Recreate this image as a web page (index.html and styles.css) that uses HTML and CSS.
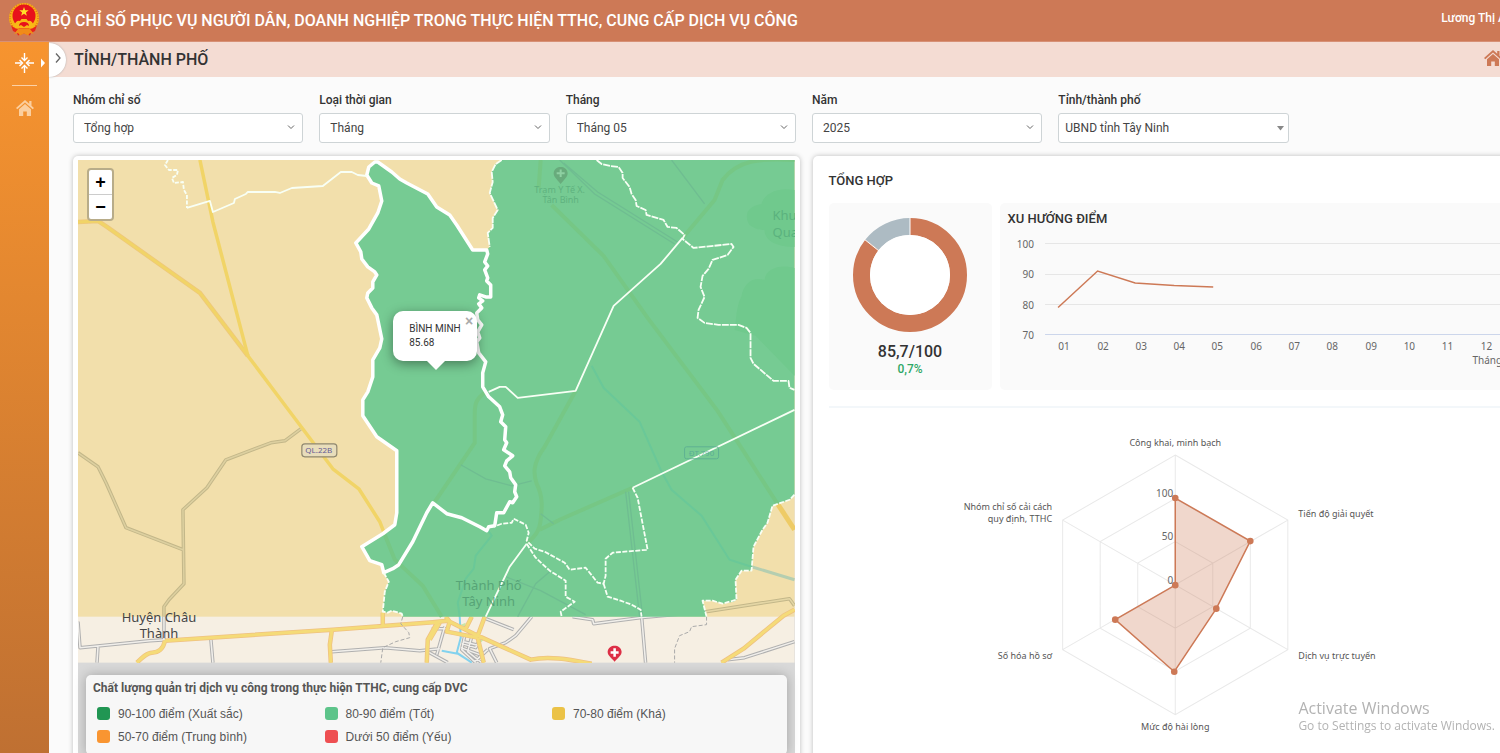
FILE: index.html
```html
<!DOCTYPE html>
<html lang="vi">
<head>
<meta charset="utf-8">
<meta name="viewport" content="width=device-width, initial-scale=1">
<title>Bộ chỉ số phục vụ người dân, doanh nghiệp</title>
<link rel="stylesheet" href="styles.css">
</head>
<body>
<svg class="sprite" aria-hidden="true">
  <symbol id="house" viewBox="0 0 18 16"><path d="M9 0 0 8l1.300 1.300L9 2.600l7.700 6.700L18 8l-2.500-2.200V1h-2.300v2.700z"/><path d="M9 4 3 9.300V16h4.200v-4.500h3.600V16H15V9.300z"/></symbol>
  <symbol id="chevron" viewBox="0 0 8 8"><path d="M1 2.500 4 5.500 7 2.500" fill="none" stroke="currentColor" stroke-width="1"/></symbol>
</svg>
<div class="app">
  <header class="topbar">
    <svg class="emblem" viewBox="0 0 32 34" aria-label="Quốc huy">
      <circle cx="16" cy="16" r="15" fill="#f7b516"/>
      <circle cx="16" cy="16" r="14" fill="none" stroke="#e2711c" stroke-width="1.500" stroke-dasharray="1 1.500"/>
      <circle cx="16" cy="14" r="11.500" fill="#e8121b"/>
      <path d="M16 5l1.200 3.300h3.500l-2.800 2.100 1 3.400-2.900-2-2.900 2 1-3.400-2.800-2.100h3.500z" fill="#ffe028"/>
      <path d="M6 24q2-6 6-5l1.500-2h5l1.500 2q4-1 6 5-3 5-10 6Q9 29 6 24z" fill="#f9b916"/>
      <path d="M11 24q0-4 5-4t5 4l-2-1-3 2-3-2z" fill="#e8121b"/>
      <path d="M3 23q5 5 8 3.500h10q3 1.500 8-3.500l-2 6-4 2-1 2.500-6-2-6 2-1-2.500-4-2z" fill="#e8231b"/>
      <path d="M6 32l4-5h12l4 5-4-1-2 2.500-4-2-4 2L10 31z" fill="#f18b18"/>
    </svg>
    <h1 class="brand">BỘ CHỈ SỐ PHỤC VỤ NGƯỜI DÂN, DOANH NGHIỆP TRONG THỰC HIỆN TTHC, CUNG CẤP DỊCH VỤ CÔNG</h1>
    <span class="user">Lương Thị Á</span>
  </header>
  <div class="shell">
    <nav class="sidebar">
      <button class="side-btn" aria-label="Thu gọn">
        <svg viewBox="0 0 28 20" class="compress"><g fill="none" stroke="#fff" stroke-width="1.400"><path d="M0 10h7M19 10h-7M9.500 0v7M9.500 20v-7"/><path d="M4.500 7 7.500 10l-3 3M14.500 7l-3 3 3 3M6.500 4.500l3 3 3-3M6.500 15.500l3-3 3 3"/></g><path d="M26 5.500l4 4.500-4 4.500z" fill="#fff"/></svg>
      </button>
      <hr class="side-rule">
      <a href="#" class="side-link" aria-label="Trang chủ"><svg class="house"><use href="#house"/></svg></a>
    </nav>
    <main class="main">
      <div class="titlebar">
        <button class="expand" aria-label="Mở menu"><svg viewBox="0 0 8 12"><path d="M2 1.500 6 6l-4 4.500" fill="none" stroke="#666" stroke-width="1.300"/></svg></button>
        <h2>TỈNH/THÀNH PHỐ</h2>
        <a href="#" class="home" aria-label="Trang chủ"><svg class="house"><use href="#house"/></svg></a>
      </div>
      <div class="content">
        <form class="filters">
          <div class="field"><label for="f1">Nhóm chỉ số</label><div class="pick"><select id="f1"><option>Tổng hợp</option></select><svg><use href="#chevron"/></svg></div></div>
          <div class="field"><label for="f2">Loại thời gian</label><div class="pick"><select id="f2"><option>Tháng</option></select><svg><use href="#chevron"/></svg></div></div>
          <div class="field"><label for="f3">Tháng</label><div class="pick"><select id="f3"><option>Tháng 05</option></select><svg><use href="#chevron"/></svg></div></div>
          <div class="field"><label for="f4">Năm</label><div class="pick"><select id="f4"><option>2025</option></select><svg><use href="#chevron"/></svg></div></div>
          <div class="field"><label for="f5">Tỉnh/thành phố</label><div class="pick pick-solid"><select id="f5"><option>UBND tỉnh Tây Ninh</option></select><svg viewBox="0 0 8 8"><path d="M1 2h7L4.500 6.500z" fill="#888"/></svg></div></div>
        </form>
        <div class="cards">
          <section class="card map-card">
            <div class="map">
              <div class="map-view">
              <svg class="tiles" viewBox="78 160 717 503">
                <rect x="78" y="160" width="717" height="503" fill="#f6efe3"/>
                <rect x="78" y="160" width="717" height="457" fill="#f2dfab"/>
                <g fill="none" stroke-linejoin="round">
                  <path stroke="#c3b789" stroke-width="3.500" d="M78 453 98 467 106 483 126 528 183 550M301 429 285 441 271 443 226 460 207 488 183 510 184 584 169 600 164 607 164 617"/>
                  <path stroke="#ddd0a0" stroke-width="1.500" d="M78 453 98 467 106 483 126 528 183 550M301 429 285 441 271 443 226 460 207 488 183 510 184 584 169 600 164 607 164 617"/>
                  <path stroke="#eec77c" stroke-width="4.500" d="M78 222 98 221 107 227 200 293 248 356"/>
                  <path stroke="#f1d467" stroke-width="3" d="M78 222 98 221 107 227 200 293 248 356"/>
                  <path stroke="#f1d467" stroke-width="3.500" d="M200 160 213 222 248 356 290 412 333 469 359 489 380 522 385 535"/>
                  <path stroke="#c3b789" stroke-width="3.500" d="M706 612 790 599 795 606"/><path stroke="#e4d6a5" stroke-width="1.500" d="M706 612 790 599 795 606"/>
                  <path stroke="#b5ceb0" stroke-width="3" d="M752 567 795 580"/>
                  <path stroke="#eecb66" stroke-width="5" d="M778 504 795 530"/>
                  <path stroke="#b0b0b0" stroke-width="3.500" d="M164 617V641M78 622 80 648 150 641 166 640M98 647 97 663M211 640 213 663M332 652 385 648 420 651 440 649M486 619 514 630M532 617 516 636 506 643 490 649 497 663M573 617 593 620 594 624 640 618 706 612M642 617 646 663M795 642 745 658 728 660M445 627 437 655M428 652 448 663M447 629H432M465 636 462 650 476 663M461 648 480 655M472 637 468 652 482 663M480 640 476 648 462 644M488 650 475 662M464 642 480 646"/>
                  <path stroke="#f1efeb" stroke-width="1.500" d="M164 617V641M78 622 80 648 150 641 166 640M98 647 97 663M211 640 213 663M332 652 385 648 420 651 440 649M486 619 514 630M532 617 516 636 506 643 490 649 497 663M573 617 593 620 594 624 640 618 706 612M642 617 646 663M795 642 745 658 728 660M445 627 437 655M428 652 448 663M447 629H432M465 636 462 650 476 663M461 648 480 655M472 637 468 652 482 663M480 640 476 648 462 644M488 650 475 662M464 642 480 646"/>
                  <path fill="#c9e6a4" d="M461 625 466 623 465 628zM478 639 485 639 481 643z"/>
                  <path stroke="#83d2ee" stroke-width="2" d="M460 617 461 638 457 653 472 663M442 651 458 654 466 659"/>
                  <path stroke="#efc181" stroke-width="4.500" d="M165 641 333 630 440 622M165 641C163 651 157 653 152 653S142 658 137 663M332 631 330 645 331 663M383 613V626M438 622 428 640 427 663M428 623 448 621 478 636 531 660C550 656 570 660 592 664M440 623 430 640M446 617 450 622 447 632 478 638M478 636 485 617M478 638 484 663M466 629 472 617M722 663 744 649 784 616 795 610"/>
                  <path stroke="#f5db78" stroke-width="3" d="M165 641 333 630 440 622M165 641C163 651 157 653 152 653S142 658 137 663M332 631 330 645 331 663M383 613V626M438 622 428 640 427 663M428 623 448 621 478 636 531 660C550 656 570 660 592 664M440 623 430 640M446 617 450 622 447 632 478 638M478 636 485 617M478 638 484 663M466 629 472 617M722 663 744 649 784 616 795 610"/>
                  <path stroke="#aaa" stroke-dasharray="4 2" d="M403 617 401 624 409 633 410 638 396 642 383 648 381 663M707 617V625L692 627 690 632 680 636 675 649V663"/>
                </g>
                <path fill="#76cb93" d="M795 160H502L496 164 492 172 493 182 490 193 498 210 493 218V228L488 233 490 247 487 250H473L457 225 450 215 437 207 428 194 407 183 392 172 378 162H375L369 167 367 175 372 183 379 186 382 201 378 213 369 229 356 243 361 252 362 259 368 267 375 272 377 275 373 282V288L367 298 372 308 377 315 382 339 380 348 373 360V377L368 392 363 400V416L377 437 397 451V513L395 525 383 534 362 547 370 561 382 565 384 573 389 582 385 592 383 612 388 613 392 611 402 614 403 617H707L703 601H713L723 604 734 602 737 600 736 580 742 571H752L754 547 763 530 768 523 773 506 790 500 795 495z"/>
                <path fill="#70c98d" d="M795 190C778 187 764 194 762 204 748 206 744 215 750 225 757 230 762 230 765 230 765 242 780 247 795 247zM795 268C782 264 766 268 765 280 752 276 744 285 742 296 736 308 737 320 735 330L756 336 795 338zM756 336 795 376V338z"/>
                <g fill="none" stroke="#76c785" stroke-width="4">
                  <path d="M541 160 539 188M552 205 604 256 648 318 718 411 778 504M795 160C760 158 738 160 723 180L715 200 683 238M576 391 545 447C532 465 534 475 537 484 544 498 542 510 541 520 540 532 534 538 527 544M633 488 560 520 540 530M487 391C475 400 475 405 475 415V443L435 502M385 535 395 560 423 586 442 617"/>
                </g>
                <g fill="none" stroke="#6fbd91" stroke-width="1.300">
                  <path d="M560 160 595 194 675 244M564 163 598 192 678 242M672 160 705 204M461 465 486 479 512 486 532 481M626 492 640 617M629 492 643 617M541 514 554 524M550 572 536 584 518 617M506 577 541 591 586 615"/>
                </g>
                <g fill="none" stroke="#6ac898" stroke-width="2"><path d="M592 366 604 388 640 422 662 472 672 490 702 516 730 560 752 567M488 530 492 536 476 556 474 569 466 579 458 603 460 617"/></g>
                <path fill="none" stroke="#fff" stroke-width="3.500" stroke-linejoin="round" d="M367 175 369 167 375 162H378L392 172 400 179 407 183 428 194 437 207 450 215 457 225 473 250H487L488 254 485 262 488 266 485 270 488 278 487 281 491 285V297H486L480 295 479 298 483 301 479 304 482 308 477 313 478 320 482 325 478 332 480 338 477 342 479 353 486 362 483 373V387L489 397 500 407 503 415 501 422 506 427 505 440 507 443 504 450 513 456 507 461 505 466 510 472 511 478 516 485 515 492 517 497 513 503 510 502 504 513H497L495 526 489 527 487 531 480 527 462 518 447 514 433 503 427 513 413 542 399 565 393 569 384 573 382 565 370 561 362 547 383 534 395 525 397 513V451L377 437 363 416V400L368 392 373 377V360L380 348 382 339 377 315 372 308 367 298 368 293 373 288V282L377 275 375 272 368 267 362 259 361 252 356 243 369 229 378 213 382 201 379 186 372 183z"/>
                <g fill="none" stroke="#f8fff5" stroke-width="1.800" stroke-linejoin="round">
                  <path d="M187 208 210 201 213 212 234 203 235 199 246 194 248 192H275L280 193 292 188 323 186 341 172 352 172 358 175 367 176"/>
                  <path stroke-dasharray="4 1.500" d="M168 160 165 165 169 170H178L177 175 172 178 174 183 183 182 184 190 187 195 187 208"/>
                  <path stroke-dasharray="7 1" d="M502 160 496 164 492 172 493 182 490 193 498 210 493 218V228L488 233 490 247M597 160 602 164 611 166 619 167 623 173 623 178 630 187 632 194 636 200 637 206 646 210 647 215 664 220 668 227 677 228 685 235 683 239 694 248 732 244 734 247 728 255 713 260 709 269 703 276 701 287 705 297 699 310 698 318 705 323 719 325H739L747 328 751 333V358L754 364 774 381H789L790 388 795 390"/>
                  <path d="M683 238 661 264 614 306 576 391 518 398 506 387 500 387 489 392M486 617 510 567 527 544M795 410 633 488"/>
                  <path stroke-dasharray="5 1.500" d="M633 488 638 498 648 550 613 553 606 559V576L604 584 598 583 586 568 570 570 565 563 545 552 535 549 527 541 529 533 526 525 514 519 512 523 502 524 494 527M527 544 536 558 550 571 566 581V597L575 602 561 612 562 617M604 584 608 597 621 601 632 605 641 610 642 617M384 573 389 582 385 592 383 612 388 613 392 611 402 614 403 617M795 495 790 500 773 506 768 523 763 530 754 547 752 571H742L736 580 737 600 723 604 713 601H703L707 617"/>
                </g>
                <rect x="302" y="444" width="35" height="13" rx="3" fill="#e8ddbb" stroke="#8f876f" stroke-width="1.200"/>
                <text class="shield" x="319" y="453">QL.22B</text>
                <rect x="685" y="447" width="34" height="12" rx="2" fill="none" stroke="#5eb193"/>
                <text class="shield faded" x="702" y="456">ĐT.790</text>
                <path d="M561 184C557 179 554 177 554 173 555 165 567 165 568 173 568 177 565 179 561 184z" fill="#68ab7c"/><path d="M561 169.500V177M557 173.300H565" stroke="#8ed0a2" stroke-width="2"/>
                <g class="poi"><text x="560" y="193">Trạm Y Tế X.</text><text x="561" y="203">Tân Bình</text></g>
                <g class="park"><text x="773" y="220">Khu</text><text x="773" y="237">Qua</text></g>
                <g class="city faded"><text x="489" y="590">Thành Phố</text><text x="489" y="606">Tây Ninh</text></g>
                <g class="city"><text x="159" y="622">Huyện Châu</text><text x="159" y="638">Thành</text></g>
                <path d="M615 662C611 657 608 656 608 652 609 644 621 644 622 652 622 656 619 657 615 662z" fill="#dd2f46"/><path d="M615 648.500V657M611 652.800H619" stroke="#fff" stroke-width="2.500"/>
              </svg>
              <div class="zoom"><button aria-label="Phóng to">+</button><button aria-label="Thu nhỏ">−</button></div>
              <div class="popup"><button class="close" aria-label="Đóng">×</button>BÌNH MINH<br>85.68</div>
              </div>
              <div class="legend">
                <h3>Chất lượng quản trị dịch vụ công trong thực hiện TTHC, cung cấp DVC</h3>
                <ul>
                  <li><i class="sw c90"></i>90-100 điểm (Xuất sắc)</li>
                  <li><i class="sw c80"></i>80-90 điểm (Tốt)</li>
                  <li><i class="sw c70"></i>70-80 điểm (Khá)</li>
                  <li><i class="sw c50"></i>50-70 điểm (Trung bình)</li>
                  <li><i class="sw c00"></i>Dưới 50 điểm (Yếu)</li>
                </ul>
              </div>
            </div>
          </section>
          <section class="card stats">
            <h3 class="heading">TỔNG HỢP</h3>
            <div class="panels">
              <div class="panel score">
                <svg viewBox="-57 -57 114 114">
                  <g fill="none" stroke-width="17"><circle r="48.500" stroke="#cd7956" pathLength="100" stroke-dasharray="85.700 14.300" transform="rotate(-90)"/><circle r="48.500" stroke="#adbbc3" pathLength="100" stroke-dasharray="14.300 85.700" stroke-dashoffset="-85.700" transform="rotate(-90)"/></g>
                  <path d="M0-58v20M-46-36-31-24" stroke="#fff" stroke-width="1"/>
                  <circle r="40" fill="#fff"/>
                </svg>
                <strong>85,7/100</strong>
                <span>0,7%</span>
              </div>
              <div class="panel trend">
                <h3 class="heading">XU HƯỚNG ĐIỂM</h3>
                <svg viewBox="0 0 521 144">
                  <g stroke="#e6e6e6"><path d="M45 11.500H506M45 42.500H506M45 72.500H506"/><path d="M45 102.500H506" stroke="#ccd6eb"/></g>
                  <path d="M58 75.500 97.500 39 135 51 174 53.500 213 55" fill="none" stroke="#cd7956" stroke-width="1.500"/>
                  <g class="axis end"><text x="34" y="16">100</text><text x="34" y="46">90</text><text x="34" y="77">80</text><text x="34" y="107">70</text></g>
                  <g class="axis mid"><text x="64" y="118">01</text><text x="103" y="118">02</text><text x="141" y="118">03</text><text x="179" y="118">04</text><text x="217" y="118">05</text><text x="256" y="118">06</text><text x="294" y="118">07</text><text x="332" y="118">08</text><text x="371" y="118">09</text><text x="409" y="118">10</text><text x="447" y="118">11</text><text x="486" y="118">12</text></g>
                  <text class="axis" x="472" y="132">Tháng</text>
                </svg>
              </div>
            </div>
            <hr class="rule">
            <svg class="radar" viewBox="829 408 692 350">
              <g fill="none" stroke="#e9e9e9">
                <path d="M1175 455 1287.500 520V649.500L1175 714.500 1062.500 649.500V520zM1175 498.500 1250 541.500V628L1175 671 1100 628V541.500zM1175 541.500 1212.500 563V606.500L1175 628 1137.500 606.500V563zM1175 455V714.500M1062.500 520 1287.500 649.500M1287.500 520 1062.500 649.500"/>
              </g>
              <path d="M1175 498 1250 541 1216 608.500 1174 671.500 1115 619.500 1175 585z" fill="#cd7956" fill-opacity=".3" stroke="#cd7956" stroke-width="1.500"/>
              <g fill="#cd7956"><circle cx="1175" cy="498" r="3.300"/><circle cx="1250" cy="541" r="3.300"/><circle cx="1216" cy="608.500" r="3.300"/><circle cx="1174" cy="671.500" r="3.300"/><circle cx="1115" cy="619.500" r="3.300"/><circle cx="1175" cy="585" r="3.300"/></g>
              <g class="axis end"><text x="1173" y="497">100</text><text x="1173" y="540">50</text><text x="1173" y="584">0</text></g>
              <g class="cat mid"><text x="1175" y="446">Công khai, minh bạch</text><text x="1175" y="730">Mức độ hài lòng</text></g>
              <g class="cat"><text x="1298" y="517">Tiến độ giải quyết</text><text x="1298" y="659">Dịch vụ trực tuyến</text></g>
              <g class="cat end"><text x="1052" y="510">Nhóm chỉ số cải cách</text><text x="1052" y="522">quy định, TTHC</text><text x="1052" y="659">Số hóa hồ sơ</text></g>
            </svg>
          </section>
        </div>
      </div>
    </main>
  </div>
</div>
<aside class="watermark"><p>Activate Windows</p><small>Go to Settings to activate Windows.</small></aside>
</body>
</html>
```
FILE: styles.css
```css
* { box-sizing: border-box; }
body {
  margin: 0;
  height: 100vh;
  overflow: hidden;
  background: #fbfbfb;
  color: #333;
  font: 12px/16px Roboto, "Noto Sans", sans-serif;
}
h1, h2, h3, p, ul { margin: 0; padding: 0; }
button { padding: 0; border: 0; background: none; color: inherit; font: inherit; }
.sprite { display: none; }
.app { width: calc(100% + 63px); min-height: 100vh; display: flex; flex-direction: column; }

.topbar {
  display: flex;
  align-items: center;
  height: 42px;
  padding: 0 57px 0 8px;
  background: #cd7956;
  border-bottom: 1px solid #d79176;
  color: #fff;
}
.emblem { width: 32px; height: 34px; margin-bottom: 4px; }
.brand { margin-left: 10px; font-size: 16px; line-height: 20px; font-weight: 500; white-space: nowrap; }
.user { margin-left: auto; padding-bottom: 5px; font-weight: 500; }

.shell { display: flex; flex: 1; }
.sidebar {
  flex: none;
  width: 49px;
  height: calc(100vh - 42px);
  padding-top: 11px;
  background: linear-gradient(#f7942f, #bf7032);
  text-align: center;
}
.side-btn { display: block; width: 49px; height: 20px; }
.compress { display: block; width: 28px; height: 20px; margin-left: 15px; overflow: visible; }
.side-rule { width: 25px; height: 1px; margin: 12px auto 14px; border: 0; background: #fbd1a6; }
.house { width: 18px; height: 16px; fill: currentColor; }
.side-link { color: #fbcf9f; }

.main { flex: 1; min-width: 0; }
.titlebar {
  display: flex;
  align-items: center;
  height: 35px;
  padding-right: 61px;
  background: #f4dcd3;
}
.titlebar h2 { margin-left: 8px; font-size: 16px; line-height: 20px; font-weight: 500; }
.expand {
  width: 17px;
  height: 34px;
  border-radius: 0 17px 17px 0;
  background: #fff;
  box-shadow: 0 0 2px #aaa;
}
.expand svg { width: 8px; height: 12px; }
.home { margin-left: auto; padding-bottom: 3px; color: #cd7956; }
.home .house { display: block; }

.content { padding: 15px 24px 0; }
.filters { display: grid; grid-template-columns: repeat(6, 1fr); gap: 16px; padding-right: 4px; }
.field label { display: block; margin-bottom: 5px; font-weight: 500; }
.pick { position: relative; }
.pick select {
  display: block;
  width: 100%;
  height: 30px;
  padding: 0 24px 1px 10px;
  appearance: none;
  border: 1px solid #ced4d6;
  border-radius: 3px;
  background: #fff;
  color: #444;
  font: inherit;
}
.pick-solid select { padding: 0 24px 0 6px; }
.pick svg { position: absolute; right: 8px; top: 10px; width: 8px; height: 8px; color: #666; pointer-events: none; }
.pick-solid svg { right: 5px; top: 11px; }

.cards { display: grid; grid-template-columns: repeat(2, minmax(0, 1fr)); gap: 13px; margin-top: 13px; }
.card { border-radius: 5px; background: #fff; box-shadow: 0 0 5px rgba(0, 0, 0, .25); }
.map-card { padding: 4px 5px; }
.map { background: #d9d9d9; padding-bottom: 8px; }
.map-view { position: relative; }
.tiles { display: block; width: 100%; height: auto; }
.tiles text { font-family: "Noto Sans", sans-serif; text-anchor: middle; }
.shield { font-size: 8px; fill: #665b94; }
.city { font-size: 13px; fill: #444; }
.tiles .shield.faded { fill: #4f9f96; fill-opacity: .7; }
.city.faded { fill: #57a477; }
.poi { font-size: 9px; fill: #5fb27f; }
.park { font-size: 13px; fill: #5bb27e; }
.tiles .park text { text-anchor: start; }
.zoom {
  position: absolute;
  left: 9px;
  top: 8px;
  width: 27px;
  border: 2px solid #b8ac89;
  border-radius: 4px;
  background: #fff;
}
.zoom button { display: block; width: 23px; height: 24px; color: #000; font: bold 18px/24px "Liberation Sans", sans-serif; }
.zoom button + button { height: 25px; border-top: 1px solid #ccc; }
.popup {
  position: absolute;
  left: 44%;
  top: 30%;
  width: 84px;
  height: 50px;
  padding: 11px 0 0 16px;
  border-radius: 10px;
  background: #fff;
  box-shadow: 0 3px 12px rgba(0, 0, 0, .4);
  font-size: 10px;
  line-height: 14px;
  white-space: nowrap;
}
.popup::after {
  content: "";
  position: absolute;
  left: 34px;
  top: 100%;
  border: 9px solid transparent;
  border-top-color: #fff;
  border-bottom: 0;
}
.close { position: absolute; right: 4px; top: 3px; color: #aaa; font: bold 14px/14px "Liberation Sans", sans-serif; }
.legend {
  margin: 12px 8px 0;
  padding: 5px 7px 10px;
  border-radius: 5px;
  background: #f7f7f7;
  box-shadow: 0 0 12px rgba(0, 0, 0, .25);
  color: #555;
}
.legend h3 { font-size: 12px; line-height: 16px; }
.legend ul {
  display: grid;
  grid-template-columns: repeat(3, 1fr);
  row-gap: 7px;
  padding: 10px 0 0 4px;
  list-style: none;
  font-family: "Liberation Sans", sans-serif;
}
.legend li { display: flex; align-items: center; gap: 8px; line-height: 16px; }
.sw { width: 13px; height: 13px; border-radius: 3px; }
.c90 { background: #219653; }
.c80 { background: #5dc48a; }
.c70 { background: #ebc246; }
.c50 { background: #f99531; }
.c00 { background: #ee4f52; }

.stats { padding: 15px 18px 0 16px; }
.heading { font-size: 13px; line-height: 20px; font-weight: 500; }
.panels { display: grid; grid-template-columns: 163px 1fr; gap: 8px; margin-top: 12px; }
.panel { height: 187px; border-radius: 5px; background: #fafafa; }
.score { display: flex; flex-direction: column; align-items: center; padding-top: 15px; }
.score svg { width: 114px; height: 114px; }
.score strong { margin-top: 10px; font-size: 16px; line-height: 20px; font-weight: 500; }
.score span { color: #2fa866; font-weight: 500; line-height: 15px; }
.trend { padding-top: 6px; }
.trend .heading { padding-left: 8px; }
.trend svg { display: block; width: 100%; margin-top: 3px; }
.rule { height: 2px; margin: 16px 0 0; border: 0; background: #f3f7fa; }
.radar { display: block; width: 100%; }
.axis, .cat { font-family: "Noto Sans", sans-serif; font-size: 10px; fill: #666; }
.cat { font-size: 9px; fill: #555; }
.mid { text-anchor: middle; }
.end { text-anchor: end; }

.watermark {
  position: fixed;
  right: 5px;
  bottom: 19px;
  color: #b3b3b3;
  font-family: "Open Sans", sans-serif;
}
.watermark p { font-size: 16px; line-height: 20px; }
.watermark small { display: block; font-size: 12px; line-height: 16px; }
```
